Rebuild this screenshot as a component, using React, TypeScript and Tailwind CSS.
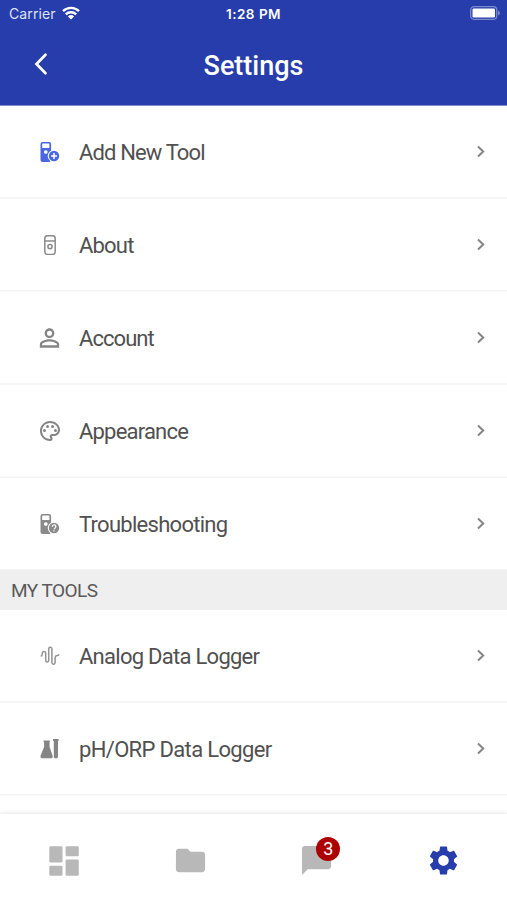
import React from "react";
import {
  MdChatBubble,
  MdFolder,
  MdOutlinePalette,
  MdPersonOutline,
  MdSettings,
} from "react-icons/md";

interface MenuRowProps {
  icon: React.ReactNode;
  label: string;
  className?: string;
}

const ToolPlusIcon = () => (
  <svg width="20" height="20" viewBox="0 0 20 20" fill="#4a67e3">
    <path
      fillRule="evenodd"
      d="M2.5 0h6.6a2 2 0 0 1 2 2v6.8a5.6 5.6 0 0 0-1.6 9.2l1 2H2.5a2 2 0 0 1-2-2V2a2 2 0 0 1 2-2zM2.2 2v4h7.2V2q0-.6-.6-.6H2.8Q2.2 1.4 2.2 2zM5.8 8.2a1.8 1.8 0 1 0 .01 0z"
    />
    <circle cx="14" cy="14" r="5.2" />
    <path d="M14 11v6M11 14h6" stroke="#fff" strokeWidth="1.6" />
  </svg>
);

const ToolIcon = () => (
  <svg width="20" height="20" viewBox="0 0 20 20" fill="none" stroke="#8a8a8a" strokeWidth="1.5">
    <rect x="4.8" y="0.8" width="10.4" height="18.6" rx="2.6" />
    <path d="M5 6h10" />
    <circle cx="10" cy="11.6" r="2.1" />
  </svg>
);

const ToolHelpIcon = () => (
  <svg width="20" height="20" viewBox="0 0 20 20" fill="#8a8a8a">
    <path
      fillRule="evenodd"
      d="M2.5 0h6.6a2 2 0 0 1 2 2v6.8a5.6 5.6 0 0 0-1.6 9.2l1 2H2.5a2 2 0 0 1-2-2V2a2 2 0 0 1 2-2zM2.2 2v4h7.2V2q0-.6-.6-.6H2.8Q2.2 1.4 2.2 2zM5.8 8.2a1.8 1.8 0 1 0 .01 0z"
    />
    <circle cx="14" cy="14" r="5.2" />
    <path
      d="M12.3 12.7a1.8 1.6 0 1 1 2.8 1.2q-.9.5-1 1.3M14 16.2v1.2"
      fill="none"
      stroke="#fff"
      strokeWidth="1.2"
    />
  </svg>
);

const WaveIcon = () => (
  <svg width="20" height="20" viewBox="0 0 20 20" fill="none" stroke="#939393" strokeWidth="1.5" strokeLinecap="round">
    <path d="M1.2 10Q2 9.8 2.2 8.4L2.4 6.6a1.7 1.7 0 0 1 3.3.2V14.4a1.5 1.5 0 0 0 3 0V2.8a1.6 1.6 0 0 1 3.2 0V16.6a1.6 1.6 0 0 0 3.2 0V11.6q.3-1.8 2-2 1.3 0 1.7-.9" />
  </svg>
);

const FlaskIcon = () => (
  <svg width="20" height="20" viewBox="0 0 20 20" fill="#858585">
    <path d="M3.6 1.5h6.2v1.4H9.6v5L12.4 16q1.1 3.3-1.4 3.3H2.2Q-.2 19.3.8 16l3.3-8.1v-5H3.6zM13 0h5.6v2H18v15.4a2 2 0 0 1-4.2 0V2H13z" />
  </svg>
);

const DashboardIcon = () => (
  <svg className="ml-0.5" width="30" height="30" viewBox="0 0 30 30" fill="#b8b8b8">
    <rect x="0.3" y="0.3" width="13.2" height="16.3" rx="1.3" />
    <rect x="0.3" y="19.8" width="13.2" height="10" rx="1.3" />
    <rect x="16.6" y="0.3" width="13.2" height="10" rx="1.3" />
    <rect x="16.6" y="13.4" width="13.2" height="16.4" rx="1.3" />
  </svg>
);

const MenuRow: React.FC<MenuRowProps> = ({ icon, label, className = "" }) => (
  <div className="flex h-[93px] shrink-0 items-center border-b-2 border-[#f5f5f5] pl-[35px] pr-[21px]">
    <span className="flex w-[29px] justify-center text-[#858585]">{icon}</span>
    <span className={`ml-[15px] flex-1 whitespace-nowrap pt-0.5 text-[22px] leading-8 text-[#505050] ${className}`}>
      {label}
    </span>
    <svg width="10" height="14" viewBox="0 0 10 14" fill="none" stroke="#858585" strokeWidth="2">
      <path d="M2 1.5l5.2 5L2 11.5" />
    </svg>
  </div>
);

export default function App() {
  return (
    <div className="flex h-[900px] w-[507px] flex-col overflow-hidden bg-white font-['Roboto',sans-serif]">
      {/* Header */}
      <header className="flex h-[106px] shrink-0 flex-col border-b border-[#7d8bcc] bg-[#263dab] text-white">
        <div className="grid h-7 grid-cols-3 items-center px-[9px] font-['Inter',sans-serif] text-[13px] leading-7">
          <div className="flex items-center gap-[6px] text-[#dfe3f5]">
            <span className="text-[14px] tracking-[0.1px]">Carrier</span>
            <svg className="-mt-0.5" width="18" height="14" viewBox="0 0 18 14" fill="none" stroke="#fff" strokeWidth="2.4">
              <path d="M1 5.2a11.4 11.4 0 0 1 16 0M3.8 8.4a7.4 7.4 0 0 1 10.4 0" />
              <path d="M9 13.6L5.9 10.5a4.5 4.5 0 0 1 6.2 0z" fill="#fff" stroke="none" />
            </svg>
          </div>
          <span className="text-center text-[13.5px] font-semibold tracking-[0.5px]">1:28 PM</span>
          <svg className="-mr-[3px] -mt-0.5 justify-self-end" width="31" height="14" viewBox="0 0 31 14">
            <rect x="0.7" y="0.7" width="26" height="12.6" rx="3.2" fill="none" stroke="#7d8bcc" strokeWidth="1.3" />
            <rect x="2.5" y="2.5" width="22.5" height="9" rx="1.3" fill="#fff" />
            <path d="M28 4.5q2 1 2 2.5t-2 2.5z" fill="#7d8bcc" />
          </svg>
        </div>
        <div className="grid h-[76px] grid-cols-[80px_1fr_80px] items-center">
          <svg className="-mt-1 ml-[33px]" width="16" height="24" viewBox="0 0 16 24" fill="none" stroke="#fff" strokeWidth="2.7" strokeLinecap="round">
            <path d="M12.5 2.8L3.5 12l9 9.2" />
          </svg>
          <h1 className="text-center text-[27px] font-medium leading-9">Settings</h1>
        </div>
      </header>

      {/* Menu */}
      <main className="flex min-h-0 flex-1 flex-col overflow-hidden">
        <MenuRow icon={<ToolPlusIcon />} label="Add New Tool" className="tracking-[-0.86px]" />
        <MenuRow icon={<ToolIcon />} label="About" className="tracking-[-0.8px]" />
        <MenuRow icon={<MdPersonOutline size={30} />} label="Account" className="tracking-[-0.95px]" />
        <MenuRow icon={<MdOutlinePalette size={24} />} label="Appearance" className="tracking-[-0.8px]" />
        <MenuRow icon={<ToolHelpIcon />} label="Troubleshooting" className="tracking-[-0.72px]" />
        <h2 className="-mt-px flex h-10 shrink-0 items-center bg-[#efefef] pl-[11px] pt-0.5 text-[19px] tracking-[-0.55px] text-[#5a5a5a]">
          MY TOOLS
        </h2>
        <MenuRow icon={<WaveIcon />} label="Analog Data Logger" className="tracking-[-0.73px]" />
        <MenuRow icon={<FlaskIcon />} label="pH/ORP Data Logger" className="tracking-[-0.66px]" />
      </main>

      {/* Tab bar */}
      <nav className="z-10 grid h-[86px] shrink-0 grid-cols-4 items-center justify-items-center bg-white pb-0 pt-[7px] text-[#b8b8b8] shadow-[0_-1px_4px_rgba(0,0,0,0.10)]">
        <DashboardIcon />
        <MdFolder size={35} />
        <div className="relative">
          <MdChatBubble size={35} />
          <span className="absolute -top-[6px] left-[17px] flex size-[24px] items-center justify-center rounded-full bg-[#ac0000] text-[18px] leading-none text-white">
            3
          </span>
        </div>
        <MdSettings size={35} className="text-[#263dab]" />
      </nav>
    </div>
  );
}
